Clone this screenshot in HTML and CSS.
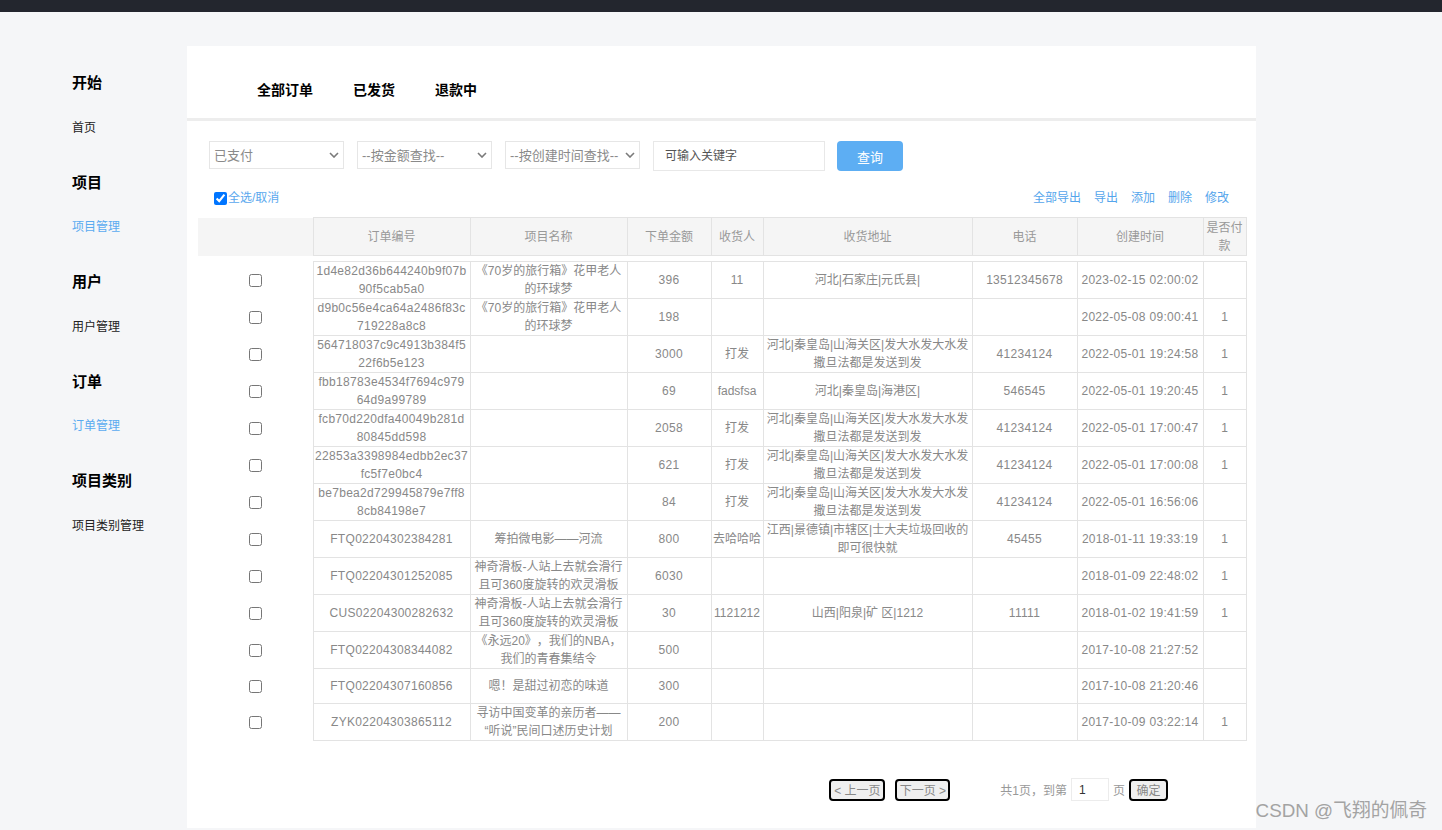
FILE: index.html
```html
<!DOCTYPE html>
<html lang="zh-CN">
<head>
<meta charset="utf-8">
<title>订单管理</title>
<link rel="stylesheet" href="styles.css">
</head>
<body>
<div class="topbar"></div>
<div class="layout">
  <aside class="sidebar">
    <div class="nav-group"><div class="nav-title">开始</div><a class="nav-item">首页</a></div>
    <div class="nav-group"><div class="nav-title">项目</div><a class="nav-item active">项目管理</a></div>
    <div class="nav-group"><div class="nav-title">用户</div><a class="nav-item">用户管理</a></div>
    <div class="nav-group"><div class="nav-title">订单</div><a class="nav-item active">订单管理</a></div>
    <div class="nav-group"><div class="nav-title">项目类别</div><a class="nav-item">项目类别管理</a></div>
  </aside>

  <main class="card">
    <nav class="tabs">
      <a class="tab">全部订单</a>
      <a class="tab">已发货</a>
      <a class="tab">退款中</a>
    </nav>

    <form class="filters">
      <span class="select-wrap">
        <select class="select"><option>已支付</option></select>
        <svg class="chev" width="10" height="6" viewBox="0 0 10 6"><path d="M1 1 L5 5 L9 1" fill="none" stroke="#7a7a7a" stroke-width="1.6"/></svg>
      </span>
      <span class="select-wrap">
        <select class="select"><option>--按金额查找--</option></select>
        <svg class="chev" width="10" height="6" viewBox="0 0 10 6"><path d="M1 1 L5 5 L9 1" fill="none" stroke="#7a7a7a" stroke-width="1.6"/></svg>
      </span>
      <span class="select-wrap">
        <select class="select"><option>--按创建时间查找--</option></select>
        <svg class="chev" width="10" height="6" viewBox="0 0 10 6"><path d="M1 1 L5 5 L9 1" fill="none" stroke="#7a7a7a" stroke-width="1.6"/></svg>
      </span>
      <input class="keyword" type="text" placeholder="可输入关键字">
      <button class="btn-query" type="button">查询</button>
    </form>

    <div class="toolbar">
      <label class="check-all"><input type="checkbox" checked>全选/取消</label>
      <div class="actions">
        <a>全部导出</a><a>导出</a><a>添加</a><a>删除</a><a>修改</a>
      </div>
    </div>

    <div class="table-wrap">
      <table class="grid grid-head">
        <colgroup>
          <col class="c-check"><col class="c-id"><col class="c-name"><col class="c-amount"><col class="c-recv"><col class="c-addr"><col class="c-phone"><col class="c-time"><col class="c-paid">
        </colgroup>
        <thead>
          <tr>
            <th class="blank"></th>
            <th>订单编号</th>
            <th>项目名称</th>
            <th>下单金额</th>
            <th>收货人</th>
            <th>收货地址</th>
            <th>电话</th>
            <th>创建时间</th>
            <th>是否付款</th>
          </tr>
        </thead>
      </table>

      <table class="grid grid-body">
        <colgroup>
          <col class="c-check"><col class="c-id"><col class="c-name"><col class="c-amount"><col class="c-recv"><col class="c-addr"><col class="c-phone"><col class="c-time"><col class="c-paid">
        </colgroup>
        <tbody>
          <tr>
            <td class="check"><input type="checkbox"></td>
            <td class="num">1d4e82d36b644240b9f07b<br>90f5cab5a0</td>
            <td>《70岁的旅行箱》花甲老人的环球梦</td>
            <td class="num">396</td>
            <td>11</td>
            <td>河北|石家庄|元氏县|</td>
            <td class="num">13512345678</td>
            <td class="num">2023-02-15 02:00:02</td>
            <td></td>
          </tr>
          <tr>
            <td class="check"><input type="checkbox"></td>
            <td class="num">d9b0c56e4ca64a2486f83c<br>719228a8c8</td>
            <td>《70岁的旅行箱》花甲老人的环球梦</td>
            <td class="num">198</td>
            <td></td>
            <td></td>
            <td class="num"></td>
            <td class="num">2022-05-08 09:00:41</td>
            <td>1</td>
          </tr>
          <tr>
            <td class="check"><input type="checkbox"></td>
            <td class="num">564718037c9c4913b384f5<br>22f6b5e123</td>
            <td></td>
            <td class="num">3000</td>
            <td>打发</td>
            <td>河北|秦皇岛|山海关区|发大水发大水发撒旦法都是发送到发</td>
            <td class="num">41234124</td>
            <td class="num">2022-05-01 19:24:58</td>
            <td>1</td>
          </tr>
          <tr>
            <td class="check"><input type="checkbox"></td>
            <td class="num">fbb18783e4534f7694c979<br>64d9a99789</td>
            <td></td>
            <td class="num">69</td>
            <td>fadsfsa</td>
            <td>河北|秦皇岛|海港区|</td>
            <td class="num">546545</td>
            <td class="num">2022-05-01 19:20:45</td>
            <td>1</td>
          </tr>
          <tr>
            <td class="check"><input type="checkbox"></td>
            <td class="num">fcb70d220dfa40049b281d<br>80845dd598</td>
            <td></td>
            <td class="num">2058</td>
            <td>打发</td>
            <td>河北|秦皇岛|山海关区|发大水发大水发撒旦法都是发送到发</td>
            <td class="num">41234124</td>
            <td class="num">2022-05-01 17:00:47</td>
            <td>1</td>
          </tr>
          <tr>
            <td class="check"><input type="checkbox"></td>
            <td class="num">22853a3398984edbb2ec37<br>fc5f7e0bc4</td>
            <td></td>
            <td class="num">621</td>
            <td>打发</td>
            <td>河北|秦皇岛|山海关区|发大水发大水发撒旦法都是发送到发</td>
            <td class="num">41234124</td>
            <td class="num">2022-05-01 17:00:08</td>
            <td>1</td>
          </tr>
          <tr>
            <td class="check"><input type="checkbox"></td>
            <td class="num">be7bea2d729945879e7ff8<br>8cb84198e7</td>
            <td></td>
            <td class="num">84</td>
            <td>打发</td>
            <td>河北|秦皇岛|山海关区|发大水发大水发撒旦法都是发送到发</td>
            <td class="num">41234124</td>
            <td class="num">2022-05-01 16:56:06</td>
            <td></td>
          </tr>
          <tr>
            <td class="check"><input type="checkbox"></td>
            <td class="num">FTQ02204302384281</td>
            <td>筹拍微电影——河流</td>
            <td class="num">800</td>
            <td>去哈哈哈</td>
            <td>江西|景德镇|市辖区|士大夫垃圾回收的即可很快就</td>
            <td class="num">45455</td>
            <td class="num">2018-01-11 19:33:19</td>
            <td>1</td>
          </tr>
          <tr>
            <td class="check"><input type="checkbox"></td>
            <td class="num">FTQ02204301252085</td>
            <td>神奇滑板-人站上去就会滑行且可360度旋转的欢灵滑板</td>
            <td class="num">6030</td>
            <td></td>
            <td></td>
            <td class="num"></td>
            <td class="num">2018-01-09 22:48:02</td>
            <td>1</td>
          </tr>
          <tr>
            <td class="check"><input type="checkbox"></td>
            <td class="num">CUS02204300282632</td>
            <td>神奇滑板-人站上去就会滑行且可360度旋转的欢灵滑板</td>
            <td class="num">30</td>
            <td>1121212</td>
            <td>山西|阳泉|矿 区|1212</td>
            <td class="num">11111</td>
            <td class="num">2018-01-02 19:41:59</td>
            <td>1</td>
          </tr>
          <tr>
            <td class="check"><input type="checkbox"></td>
            <td class="num">FTQ02204308344082</td>
            <td>《永远20》，我们的NBA，我们的青春集结令</td>
            <td class="num">500</td>
            <td></td>
            <td></td>
            <td class="num"></td>
            <td class="num">2017-10-08 21:27:52</td>
            <td></td>
          </tr>
          <tr>
            <td class="check"><input type="checkbox"></td>
            <td class="num">FTQ02204307160856</td>
            <td>嗯！是甜过初恋的味道</td>
            <td class="num">300</td>
            <td></td>
            <td></td>
            <td class="num"></td>
            <td class="num">2017-10-08 21:20:46</td>
            <td></td>
          </tr>
          <tr>
            <td class="check"><input type="checkbox"></td>
            <td class="num">ZYK02204303865112</td>
            <td>寻访中国变革的亲历者——“听说”民间口述历史计划</td>
            <td class="num">200</td>
            <td></td>
            <td></td>
            <td class="num"></td>
            <td class="num">2017-10-09 03:22:14</td>
            <td>1</td>
          </tr>
        </tbody>
      </table>
    </div>

    <div class="pager">
      <button class="pg-btn pg-prev" type="button">&lt; 上一页</button>
      <button class="pg-btn pg-next" type="button">下一页 &gt;</button>
      <span class="pg-info">共1页，到第</span>
      <input class="pg-input" type="text" value="1">
      <span class="pg-unit">页</span>
      <button class="pg-btn pg-ok" type="button">确定</button>
    </div>
  </main>
</div>
<div class="watermark">CSDN @飞翔的佩奇</div>
</body>
</html>
```

FILE: styles.css
```css
html, body {
  margin: 0;
  padding: 0;
}
body {
  background: #f5f6f8;
  font-family: "Liberation Sans", "Noto Sans CJK SC", sans-serif;
  color: #333;
  position: relative;
  height: 830px;
  overflow: hidden;
  text-spacing-trim: space-all;
}
a { text-decoration: none; cursor: pointer; }

.topbar {
  height: 12px;
  background: #23262e;
}

.layout {
  display: flex;
  align-items: flex-start;
}

/* ---------- sidebar ---------- */
.sidebar {
  width: 187px;
  box-sizing: border-box;
  padding: 61px 0 0 72px;
  display: flex;
  flex-direction: column;
}
.nav-group {
  display: flex;
  flex-direction: column;
  margin-bottom: 37px;
}
.nav-title {
  font-size: 15px;
  font-weight: bold;
  line-height: 20px;
  color: #000;
  margin-bottom: 26.5px;
}
.nav-item {
  font-size: 12px;
  line-height: 16px;
  color: #222;
}
.nav-item.active { color: #5aabf0; }

/* ---------- card ---------- */
.card {
  margin-top: 34px;
  width: 1069px;
  height: 782px;
  background: #fff;
  display: flex;
  flex-direction: column;
}

.tabs {
  height: 38px;
  padding: 34px 0 0 70px;
  display: flex;
  gap: 40px;
  border-bottom: 3px solid #ededed;
  border-radius: 3px 3px 0 0;
}
.tab {
  font-size: 14px;
  font-weight: bold;
  line-height: 20px;
  color: #000;
}

/* ---------- filters ---------- */
.filters {
  margin: 20px 0 0;
  padding-left: 22px;
  display: flex;
  align-items: flex-start;
}
.select-wrap {
  position: relative;
  display: inline-block;
  margin-right: 13px;
}
.select {
  appearance: none;
  -webkit-appearance: none;
  width: 135px;
  height: 28px;
  box-sizing: border-box;
  border: 1px solid #e6e6e6;
  border-radius: 0;
  background: #fff;
  padding: 0 0 0 4px;
  font-family: "Liberation Sans", "Noto Sans CJK SC", sans-serif;
  font-size: 13px;
  color: #8a8a8a;
  outline: none;
}
.chev {
  position: absolute;
  right: 5px;
  top: 11px;
  pointer-events: none;
}
.keyword {
  width: 172px;
  height: 30px;
  box-sizing: border-box;
  border: 1px solid #e8e8e8;
  padding: 0 0 0 11px;
  font-family: "Liberation Sans", "Noto Sans CJK SC", sans-serif;
  font-size: 12px;
  color: #444;
  outline: none;
  margin-right: 12px;
}
.keyword::placeholder { color: #555; }
.btn-query {
  width: 66px;
  height: 30px;
  border: none;
  border-radius: 4px;
  background: #5daef3;
  color: #fff;
  font-family: "Liberation Sans", "Noto Sans CJK SC", sans-serif;
  font-size: 13px;
  padding: 0;
}

/* ---------- toolbar ---------- */
.toolbar {
  margin-top: 19px;
  height: 16px;
  padding: 0 27px;
  display: flex;
  justify-content: space-between;
  align-items: center;
  font-size: 12px;
  line-height: 16px;
}
.check-all {
  display: flex;
  align-items: center;
  color: #5aa8ee;
}
.check-all input {
  margin: 0 1px 0 0;
  width: 13px;
  height: 13px;
}
.actions {
  display: flex;
  gap: 13px;
}
.actions a { color: #54a5ec; }

/* ---------- table ---------- */
.table-wrap {
  margin-top: 11px;
  padding: 0 10px 0 11px;
}
.grid {
  width: 1048px;
  table-layout: fixed;
  border-collapse: collapse;
  font-size: 12px;
  line-height: 18px;
}
.c-check { width: 115px; }
.c-id { width: 157px; }
.c-name { width: 157px; }
.c-amount { width: 84px; }
.c-recv { width: 52px; }
.c-addr { width: 209px; }
.c-phone { width: 105px; }
.c-time { width: 126px; }
.c-paid { width: 43px; }

.grid-head th {
  height: 37px;
  padding: 0 1px;
  background: #f5f5f5;
  border: 1px solid #e3e3e3;
  font-weight: normal;
  color: #999;
  text-align: center;
  vertical-align: middle;
}
.grid-head th.blank { border: none; }

.grid-body {
  margin-top: 5px;
}
.grid-body td {
  height: 34px;
  padding: 0 1px;
  border: 1px solid #e3e3e3;
  color: #888;
  text-align: center;
  vertical-align: middle;
}
.grid-body td.num { letter-spacing: 0.3px; }
.grid-body td.check {
  border: none;
  line-height: 0;
}
.grid-body td.check input {
  margin: 0;
  width: 13px;
  height: 13px;
}

/* ---------- pager ---------- */
.pager {
  margin-top: 37px;
  padding-right: 88px;
  display: flex;
  justify-content: flex-end;
  align-items: center;
  font-size: 12px;
  color: #999;
}
.pg-btn {
  height: 22px;
  box-sizing: border-box;
  border: 2px solid #000;
  border-radius: 4px;
  background: #efefef;
  color: #888;
  font-family: "Liberation Sans", "Noto Sans CJK SC", sans-serif;
  font-size: 12px;
  padding: 0;
}
.pg-prev { width: 56px; }
.pg-next { width: 55px; margin-left: 10px; }
.pg-info { margin-left: 50px; }
.pg-input {
  width: 38px;
  height: 23px;
  box-sizing: border-box;
  border: 1px solid #ececec;
  margin: 0 4px 0 4px;
  padding: 0 0 0 7px;
  font-family: "Liberation Sans", "Noto Sans CJK SC", sans-serif;
  font-size: 12px;
  color: #333;
  outline: none;
}
.pg-ok { width: 39px; margin-left: 4px; }

/* ---------- watermark ---------- */
.watermark {
  position: absolute;
  right: 15px;
  bottom: 7px;
  font-size: 18.8px;
  line-height: 24px;
  color: #a3a3a3;
  pointer-events: none;
}
```
